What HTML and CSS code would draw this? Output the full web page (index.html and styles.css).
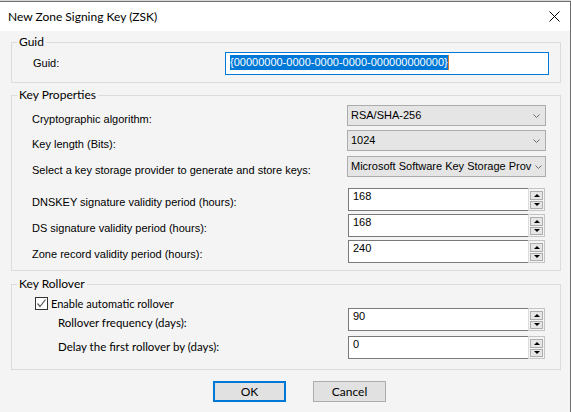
FILE: index.html
```html
<!DOCTYPE html>
<html>
<head>
<meta charset="utf-8">
<title>New Zone Signing Key (ZSK)</title>
<link rel="stylesheet" href="styles.css">
</head>
<body>
<div class="backdrop"></div>
<div class="window">
  <div class="titlebar">
    <span class="title">New Zone Signing Key (ZSK)</span>
    <svg class="close" width="11" height="11" viewBox="0 0 11 11"><path d="M0.5 0.5 L10.5 10.5 M10.5 0.5 L0.5 10.5" stroke="#000" stroke-width="1" fill="none"/></svg>
  </div>
  <div class="client">
    <fieldset class="group guid-group">
      <legend>Guid</legend>
      <div class="guid-row">
        <span class="lbl guid-lbl">Guid:</span>
        <div class="textbox"><span class="sel">{00000000-0000-0000-0000-000000000000}</span><span class="caret"></span></div>
      </div>
    </fieldset>

    <fieldset class="group kp-group">
      <legend>Key Properties</legend>
      <div class="rows">
        <div class="row">
          <span class="lbl">Cryptographic algorithm:</span>
          <div class="combo"><span class="combo-text">RSA/SHA-256</span><svg class="chev" width="7" height="4" viewBox="0 0 7 4"><path d="M0.5 0.5 L3.5 3.5 L6.5 0.5" stroke="#6a6a6a" fill="none"/></svg></div>
        </div>
        <div class="row gap-4">
          <span class="lbl">Key length (Bits):</span>
          <div class="combo"><span class="combo-text">1024</span><svg class="chev" width="7" height="4" viewBox="0 0 7 4"><path d="M0.5 0.5 L3.5 3.5 L6.5 0.5" stroke="#6a6a6a" fill="none"/></svg></div>
        </div>
        <div class="row gap-5">
          <span class="lbl">Select a key storage provider to generate and store keys:</span>
          <div class="combo"><span class="combo-text">Microsoft Software Key Storage Prov</span><svg class="chev" width="7" height="4" viewBox="0 0 7 4"><path d="M0.5 0.5 L3.5 3.5 L6.5 0.5" stroke="#6a6a6a" fill="none"/></svg></div>
        </div>
        <div class="row gap-11">
          <span class="lbl">DNSKEY signature validity period (hours):</span>
          <div class="spin"><span class="spin-field">168</span><div class="spin-btns"><span class="sbtn up"></span><span class="sbtn down"></span></div></div>
        </div>
        <div class="row gap-3">
          <span class="lbl">DS signature validity period (hours):</span>
          <div class="spin"><span class="spin-field">168</span><div class="spin-btns"><span class="sbtn up"></span><span class="sbtn down"></span></div></div>
        </div>
        <div class="row gap-3">
          <span class="lbl">Zone record validity period (hours):</span>
          <div class="spin"><span class="spin-field">240</span><div class="spin-btns"><span class="sbtn up"></span><span class="sbtn down"></span></div></div>
        </div>
      </div>
    </fieldset>

    <fieldset class="group kr-group">
      <legend>Key Rollover</legend>
      <div class="kr-body">
        <label class="check-row">
          <span class="checkbox"><svg width="11" height="11" viewBox="0 0 11 11"><path d="M1.5 5.5 L4 8.5 L9.5 1.5" stroke="#5a5a5a" stroke-width="1.2" fill="none"/></svg></span>
          <span class="check-text">Enable automatic rollover</span>
        </label>
        <div class="row kr-row first">
          <span class="lbl lbl-ui">Rollover frequency (days):</span>
          <div class="spin"><span class="spin-field">90</span><div class="spin-btns"><span class="sbtn up"></span><span class="sbtn down"></span></div></div>
        </div>
        <div class="row kr-row second gap-5">
          <span class="lbl lbl-ui">Delay the first rollover by (days):</span>
          <div class="spin"><span class="spin-field">0</span><div class="spin-btns"><span class="sbtn up"></span><span class="sbtn down"></span></div></div>
        </div>
      </div>
    </fieldset>

    <div class="buttons">
      <button class="btn default">OK</button>
      <button class="btn">Cancel</button>
    </div>
  </div>
</div>
</body>
</html>
```

FILE: styles.css
```css
* { box-sizing: border-box; }
html, body { margin: 0; padding: 0; }
body {
  background: #dedede;
  width: 571px;
  height: 412px;
  overflow: hidden;
  font-family: "Liberation Sans", Arial, sans-serif;
  font-size: 11px;
  color: #000;
}
.backdrop { height: 1px; background: #d8d8d8; }
.window {
  width: 571px;
  height: 411px;
  border-top: 1px solid #6e6e6e;
  border-right: 1px solid #6e6e6e;
  background: #f4f4f4;
}
.titlebar {
  height: 29px;
  background: #fff;
  display: flex;
  align-items: center;
  justify-content: space-between;
  padding: 0 10px 0 8px;
}
.title { font-family: Lato, "Liberation Sans", sans-serif; font-size: 12px; line-height: 14px; }
.close { display: block; }

.client { padding: 4px 9px 0 11px; }

.group {
  margin: 0;
  padding: 0;
  border: 1px solid #dcdcdc;
  min-width: 0;
}
.group legend {
  margin-left: 5px;
  padding: 0 2px;
  font-family: Lato, "Liberation Sans", sans-serif;
  font-size: 12px;
  line-height: 14px;
}
.kp-group { margin-top: 5px; }
.kr-group { margin-top: 6px; }

.lbl { flex: 1; line-height: 13px; padding-top: 8px; white-space: nowrap; }
.lbl-ui { font-family: Lato, "Liberation Sans", sans-serif; font-size: 11.5px; line-height: 14px; }

/* Guid */
.guid-row { display: flex; align-items: flex-start; padding: 3px 11px 7px 21px; }
.guid-lbl { padding-top: 5px; }
.textbox {
  width: 324px;
  height: 23px;
  border: 1px solid #0078d7;
  background: #fff;
  padding: 2px 0 0 4px;
  display: flex;
  align-items: flex-start;
}
.sel {
  display: inline-block;
  background: #0078d7;
  color: #fff;
  line-height: 15px;
  white-space: nowrap;
}
.caret { display: inline-block; width: 1px; height: 15px; background: #d8782a; }

/* Key Properties */
.rows { padding: 3px 0 7px 20px; }
.row { display: flex; align-items: flex-start; }
.gap-3 { margin-top: 3px; }
.gap-4 { margin-top: 4px; }
.gap-5 { margin-top: 5px; }
.gap-11 { margin-top: 11px; }

.combo {
  width: 199px;
  height: 21px;
  margin-right: 14px;
  border: 1px solid #acacac;
  background: #e5e5e5;
  display: flex;
  align-items: center;
  padding: 0 5px 0 3px;
}
.combo-text { flex: 1; white-space: nowrap; line-height: 19px; }
.chev { display: block; margin-left: 4px; flex: none; }

.spin { width: 197px; height: 23px; margin-right: 15px; display: flex; }
.spin-field {
  flex: 1;
  border: 1px solid #7a7a7a;
  border-right: 0;
  background: #fff;
  padding: 1px 0 0 4px;
  line-height: 13px;
}
.spin-btns {
  width: 17px;
  border: 1px solid #c4c4c4;
  border-left-color: #dcdcdc;
  background: #f4f4f4;
  padding: 2px 1px 1px 1px;
  display: flex;
  flex-direction: column;
  gap: 1px;
}
.sbtn {
  flex: 1;
  border: 1px solid #adadad;
  background: #e6e6e6;
  display: flex;
  align-items: center;
  justify-content: center;
}
.sbtn::before {
  content: "";
  width: 0;
  height: 0;
  border-left: 3px solid transparent;
  border-right: 3px solid transparent;
}
.up::before { border-bottom: 3px solid #000; }
.down::before { border-top: 3px solid #000; }

/* Key Rollover */
.kr-body { padding: 6px 0 10px 23px; }
.check-row { display: flex; align-items: center; height: 13px; gap: 3px; }
.checkbox {
  width: 13px;
  height: 13px;
  border: 1px solid #333;
  background: #fff;
  display: flex;
  align-items: center;
  justify-content: center;
}
.checkbox svg { display: block; }
.check-text { font-family: Lato, "Liberation Sans", sans-serif; font-size: 11px; line-height: 13px; }
.kr-row { padding-left: 23px; }
.kr-row.first { margin-top: -2px; }
.kr-row.first .lbl { padding-top: 8px; }
.kr-row.second .lbl { padding-top: 4px; }

/* Buttons */
.buttons { display: flex; gap: 27px; padding-left: 202px; margin-top: 11px; }
.btn {
  width: 73px;
  height: 21px;
  border: 1px solid #adadad;
  background: #e1e1e1;
  font-family: Lato, "Liberation Sans", sans-serif;
  font-size: 12px;
  color: #000;
  padding: 0;
}
.btn.default { border: 2px solid #0078d7; }
```
